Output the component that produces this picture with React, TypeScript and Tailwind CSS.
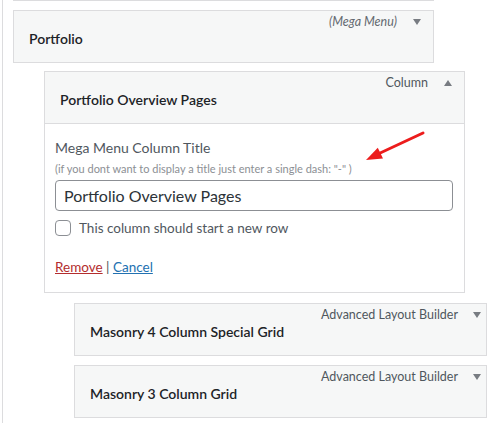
import React from 'react';

function Caret({ up }: { up?: boolean }) {
  return (
    <svg width="8" height="6" viewBox="0 0 8 6" className="fill-[#787c82] shrink-0">
      <path d={up ? 'M0 6 L4 0 L8 6Z' : 'M0 0 L8 0 L4 6Z'} />
    </svg>
  );
}

interface HeaderProps {
  title: string;
  meta: string;
  italic?: boolean;
  up?: boolean;
  gap: string;
  pr: string;
}

function ItemHeader({ title, meta, italic, up, gap, pr }: HeaderProps) {
  return (
    <div className="flex h-full">
      <div className="pt-[18px] pl-[15px] text-[14px] leading-[20px] font-semibold text-[#1d2327]">{title}</div>
      <div className={`ml-auto flex items-center h-[18px] mt-[2px] ${gap} ${pr}`}>
        <span className={`text-[12.5px] leading-[18px] text-[#50575e] ${italic ? 'italic text-[#646970]' : ''}`}>
          {meta}
        </span>
        <Caret up={up} />
      </div>
    </div>
  );
}

export default function App() {
  return (
    <div className="relative w-[500px] h-[423px] bg-white overflow-hidden font-['Lato',sans-serif]">
      <div className="flex h-full">
        <div className="ml-[2px] w-px bg-[#dcdcde] self-stretch" />
        <div className="pl-[10px] flex flex-col">
          {/* end of previous item */}
          <div className="w-[421px] h-px bg-[#dcdcde]" />

          <div className="mt-[9px] w-[421px] h-[53px] border border-[#dcdcde] bg-[#f6f7f7]">
            <ItemHeader title="Portfolio" meta="(Mega Menu)" italic gap="gap-[16px]" pr="pr-[12px]" />
          </div>

          <div className="mt-[8px] ml-[31px] w-[421px] border border-[#dcdcde] bg-white">
            <div className="h-[52px] bg-[#f6f7f7] border-b border-[#dcdcde]">
              <ItemHeader title="Portfolio Overview Pages" meta="Column" up gap="gap-[16px]" pr="pr-[12px]" />
            </div>
            <div className="px-[10px] pt-[14px] pb-[15px]">
              <div className="text-[14px] leading-[20px] text-[#50575e]">Mega Menu Column Title</div>
              <div className="mt-[3px] text-[11px] leading-[16px] text-[#8c8f94]">
                (if you dont want to display a title just enter a single dash: "-" )
              </div>
              <div className="mt-[3px] w-[398px] h-[31px] rounded-[4px] border border-[#8c8f94] px-[8px] flex items-center text-[16px] text-[#2c3338]">
                Portfolio Overview Pages
              </div>
              <label className="mt-[8px] flex items-center gap-[8px]">
                <span className="w-[16px] h-[16px] rounded-[4px] border border-[#8c8f94] bg-white" />
                <span className="text-[13.5px] leading-[18px] text-[#50575e]">This column should start a new row</span>
              </label>
              <div className="mt-[20px] text-[13.5px] leading-[20px] text-[#50575e]">
                <span className="text-[#b32d2e] underline">Remove</span> |{' '}
                <span className="text-[#2271b1] underline">Cancel</span>
              </div>
            </div>
          </div>

          <div className="mt-[10px] ml-[61px] w-[413px] h-[53px] border border-[#dcdcde] bg-[#f6f7f7]">
            <ItemHeader title="Masonry 4 Column Special Grid" meta="Advanced Layout Builder" gap="gap-[15px]" pr="pr-[5px]" />
          </div>
          <div className="mt-[9px] ml-[61px] w-[413px] h-[53px] border border-[#dcdcde] bg-[#f6f7f7]">
            <ItemHeader title="Masonry 3 Column Grid" meta="Advanced Layout Builder" gap="gap-[15px]" pr="pr-[5px]" />
          </div>
        </div>
      </div>

      {/* annotation arrow */}
      <svg className="absolute left-0 top-0 pointer-events-none" width="500" height="423">
        <line x1="423" y1="133" x2="378" y2="154" stroke="#ec1c1c" strokeWidth="3" strokeLinecap="round" />
        <polygon points="366,160 377.8,147.7 383,158.5" fill="#ec1c1c" />
      </svg>
    </div>
  );
}
